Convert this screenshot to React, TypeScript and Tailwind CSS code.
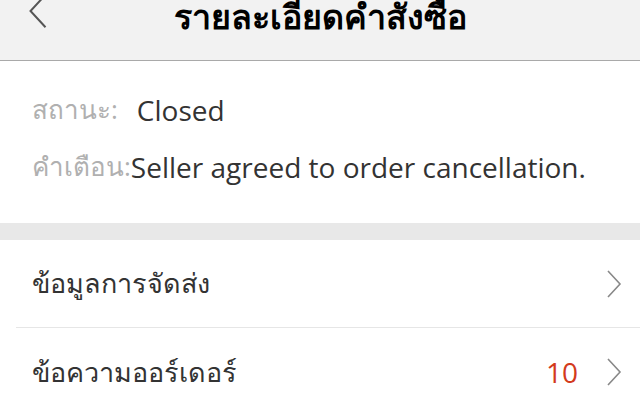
import React from 'react'

const Chevron: React.FC<{ dir: 'left' | 'right'; className?: string }> = ({ dir, className }) => (
  <svg viewBox="0 0 16 28" className={className} fill="none" stroke="currentColor" strokeWidth="1.6">
    {dir === 'left' ? <path d="M14 1 L2 14 L14 27" /> : <path d="M2 1 L14 14 L2 27" />}
  </svg>
)

const InfoRow: React.FC<{ label: string; value: string; gap?: boolean }> = ({ label, value, gap }) => (
  <div className="flex items-center h-[57px]">
    <span className="text-[#b0b0b0] text-[26px]">{label}</span>
    <span className={`text-[#333] text-[28px] ${gap ? 'ml-[19px]' : ''}`}>{value}</span>
  </div>
)

const MenuRow: React.FC<{ label: string; badge?: string; border?: boolean }> = ({ label, badge, border }) => (
  <div className="pl-[16px]">
    <div className={`flex items-center h-[88px] pl-[16px] pr-[18px] ${border ? 'border-b border-[#e6e6e6]' : ''}`}>
      <span className="flex-1 text-[#333] text-[27px]">{label}</span>
      {badge && <span className="text-[#d33a1c] text-[28px] mr-[28px]">{badge}</span>}
      <Chevron dir="right" className="w-[16px] h-[28px] text-[#888]" />
    </div>
  </div>
)

export default function App() {
  return (
    <div className="w-[640px] h-[415px] overflow-hidden bg-white" style={{ fontFamily: '"Open Sans", "Noto Sans", sans-serif' }}>
      {/* header, scrolled a bit past the top */}
      <div className="relative h-[61px] bg-[#f2f2f2] border-b border-[#a9a9a9] flex items-start justify-center">
        <div className="absolute left-[28px] top-[-10px] text-[#555]">
          <Chevron dir="left" className="w-[20px] h-[42px]" />
        </div>
        <h1 className="mt-[-12px] text-[34px] font-bold text-black leading-[56px]">รายละเอียดคำสั่งซื้อ</h1>
      </div>

      <div className="pt-[20px] pb-[28px] pl-[32px]">
        <InfoRow label="สถานะ:" value="Closed" gap />
        <InfoRow label="คำเตือน:" value="Seller agreed to order cancellation." />
      </div>

      <div className="h-[17px] bg-[#e8e8e8]" />

      <div>
        <MenuRow label="ข้อมูลการจัดส่ง" border />
        <MenuRow label="ข้อความออร์เดอร์" badge="10" />
      </div>
    </div>
  )
}
